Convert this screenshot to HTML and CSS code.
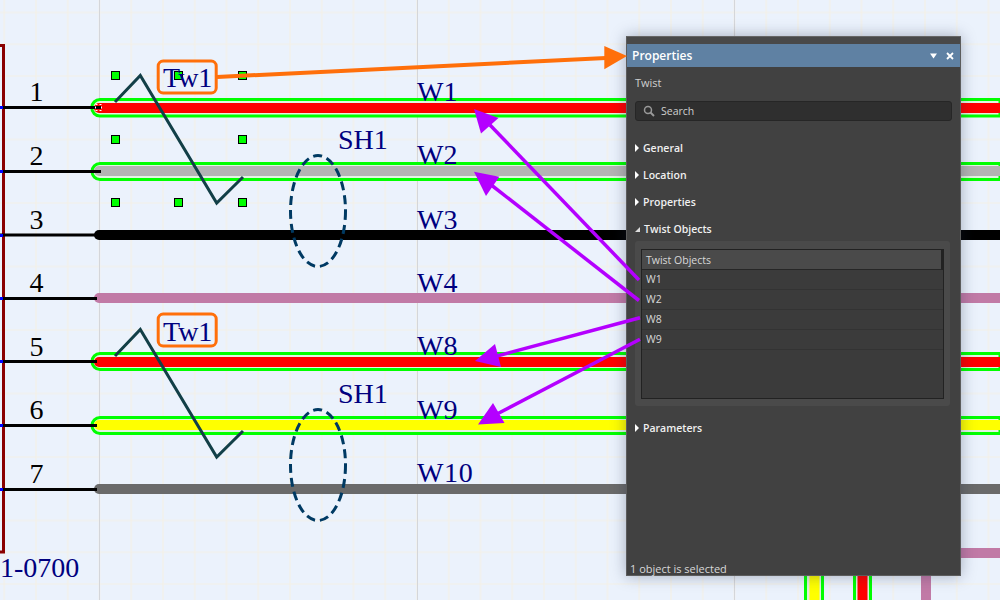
FILE: index.html
```html
<!DOCTYPE html>
<html lang="en">
<head>
<meta charset="utf-8">
<title>Twist properties</title>
<link rel="stylesheet" href="styles.css">
</head>
<body>
<div class="stage">
<svg class="sheet" width="1000" height="600" viewBox="0 0 1000 600">
  <defs>
    <pattern id="grid" x="3.250" y="11.500" width="31.750" height="31.750" patternUnits="userSpaceOnUse">
      <path d="M1 0V31.750M0 1H31.750" class="gridline"/>
    </pattern>
  </defs>
  <rect width="1000" height="600" fill="url(#grid)"/>
  <path d="M99.5 0V600M417.5 0V600M734.5 0V600" class="majorline"/>

  <g class="halo">
    <path d="M1000 99.500H100a8 8 0 0 0 0 16.500H1000z"/>
    <path d="M1000 163.500H100a8 8 0 0 0 0 16H1000z"/>
    <path d="M1000 353.500H100a8 8 0 0 0 0 16H1000z"/>
    <path d="M1000 417.500H100a8 8 0 0 0 0 16H1000z"/>
  </g>
  <g class="wires">
    <path d="M99 108H1000" stroke="#ff0000"/>
    <path d="M99 171H1000" stroke="#b4b4b4"/>
    <path d="M99 235H1000" stroke="#000000"/>
    <path d="M99 298H1000" stroke="#c17aa6"/>
    <path d="M99 362H1000" stroke="#ff0000"/>
    <path d="M99 425H1000" stroke="#ffff00"/>
    <path d="M99 489H1000" stroke="#6a6a6a"/>
  </g>

  <path d="M0 45.500H3.500V552H0" class="part"/>
  <g class="pins">
    <path d="M0 107.500H101M0 171.500H101M0 235H97M0 298.500H97M0 361.500H97M0 425.500H97M0 489.500H97"/>
  </g>
  <path d="M0 106h3v3h-3zM0 170h3v3h-3zM0 234h3v3h-3zM0 297h3v3h-3zM0 360h3v3h-3zM0 424h3v3h-3zM0 488h3v3h-3z" class="pindot"/>
  <rect x="95.500" y="104.500" width="6" height="6" class="anchor"/>

  <g class="pin-num">
    <text x="29.500" y="101">1</text>
    <text x="29.500" y="165">2</text>
    <text x="29.500" y="229">3</text>
    <text x="29.500" y="292">4</text>
    <text x="29.500" y="356">5</text>
    <text x="29.500" y="418.500">6</text>
    <text x="29.500" y="482.500">7</text>
  </g>

  <g class="label">
    <text x="417" y="101">W1</text>
    <text x="417" y="164">W2</text>
    <text x="417" y="229">W3</text>
    <text x="417" y="292">W4</text>
    <text x="417" y="355">W8</text>
    <text x="417" y="419">W9</text>
    <text x="417" y="482" class="wide">W10</text>
    <text x="338" y="149">SH1</text>
    <text x="338" y="403">SH1</text>
    <text x="0" y="577">1-0700</text>
  </g>

  <path d="M115 102L140.300 75.500L216.700 203L243 177" class="twist"/>
  <path d="M115 356L140.300 329.500L216.700 457L243 431" class="twist"/>
  <ellipse cx="318" cy="211" rx="27.500" ry="55.500" class="shield"/>
  <ellipse cx="318" cy="465" rx="27.500" ry="55.500" class="shield"/>

  <rect x="158.200" y="61" width="58" height="32" rx="5" class="tag"/>
  <rect x="158.200" y="314" width="58" height="32" rx="5" class="tag"/>

  <g class="handle">
    <rect x="111.500" y="71.500" width="8" height="8"/>
    <rect x="174.500" y="71.500" width="8" height="8"/>
    <rect x="238.500" y="71.500" width="8" height="8"/>
    <rect x="111.500" y="135.500" width="8" height="8"/>
    <rect x="238.500" y="135.500" width="8" height="8"/>
    <rect x="111.500" y="198.500" width="8" height="8"/>
    <rect x="174.500" y="198.500" width="8" height="8"/>
    <rect x="238.500" y="198.500" width="8" height="8"/>
  </g>
  <text x="163" y="87" class="label-text">Tw1</text>
  <text x="163" y="341" class="label-text">Tw1</text>

  <path d="M805.500 575V600M822.500 575V600M854.500 575V600M870.500 575V600" class="stub"/>
  <path d="M807 575H821V600H807zM856 575H869V600H856z" fill="#dff0dc"/>
  <path d="M809.500 575H819.500V600H809.500z" fill="#ffff00"/>
  <path d="M857.500 575H867.500V600H857.500z" fill="#ff0000"/>
  <path d="M921 575H931V600H921zM961 548H1000V558H961z" fill="#c17aa6"/>
</svg>

<section class="panel">
  <div class="panel-top"></div>
  <header class="titlebar">
    <span class="title">Properties</span>
    <span class="title-tools">
      <svg width="7" height="6" viewBox="0 0 7 6"><path d="M0 0.500H7L3.500 5.500z" fill="#fff"/></svg>
      <svg width="8" height="8" viewBox="0 0 8 8"><path d="M1 1L7 7M7 1L1 7" stroke="#fff" stroke-width="1.800"/></svg>
    </span>
  </header>
  <div class="body">
    <div class="kind">Twist</div>
    <div class="search">
      <svg width="12" height="12" viewBox="0 0 12 12"><circle cx="5" cy="5" r="3.500" fill="none" stroke="#999" stroke-width="1.500"/><path d="M7.500 7.500L11 11" stroke="#999" stroke-width="2"/></svg>
      <span>Search</span>
    </div>
    <div class="section first"><i class="tri-right"></i>General</div>
    <div class="section"><i class="tri-right"></i>Location</div>
    <div class="section"><i class="tri-right"></i>Properties</div>
    <div class="section"><i class="tri-down"></i>Twist Objects</div>
    <div class="group">
      <div class="table">
        <div class="thead">Twist Objects</div>
        <div class="row">W1</div>
        <div class="row">W2</div>
        <div class="row">W8</div>
        <div class="row">W9</div>
      </div>
    </div>
    <div class="section params"><i class="tri-right"></i>Parameters</div>
  </div>
  <footer class="status">1 object is selected</footer>
</section>

<svg class="overlay" width="1000" height="600" viewBox="0 0 1000 600">
  <path d="M217 77L606 58" class="arrow-orange"/>
  <path d="M604.300 46L627 56L604.300 69.300z" fill="#ff6f0a"/>
  <g class="arrow-violet">
    <path d="M639 280L490 125"/>
    <path d="M639 300.500L490 184"/>
    <path d="M640 317.700L497 356"/>
    <path d="M640 339.300L497 414"/>
  </g>
  <path d="M474 109L498.500 118L481 133.500z" fill="#b400ff"/>
  <path d="M474 171.700L499.300 176.700L486 196z" fill="#b400ff"/>
  <path d="M475 361L495 344L501 367z" fill="#b400ff"/>
  <path d="M478 424.500L504.500 423L493 403z" fill="#b400ff"/>
</svg>
</div>
</body>
</html>
```
FILE: styles.css
```css
* { box-sizing: border-box; }
html, body { margin: 0; padding: 0; }
body { width: 1000px; height: 600px; overflow: hidden; background: #ebf2fc; }
.stage { position: relative; width: 1000px; height: 600px; overflow: hidden; }
.sheet { display: block; }
.overlay { position: absolute; left: 0; top: 0; pointer-events: none; }
.gridline { fill: none; stroke: #f4f0e6; stroke-width: 1.200; }
.majorline { fill: none; stroke: #d4d6da; stroke-width: 1; }
.part { fill: none; stroke: #8a0000; stroke-width: 3; }
.pins path { fill: none; stroke: #000; stroke-width: 3; }
.pindot { fill: #0000ff; }
.anchor { fill: none; stroke: #fff; stroke-width: 1; stroke-dasharray: 2 2; }
.halo path { fill: #e2f4e2; stroke: #00ff00; stroke-width: 3; }
.wires path { fill: none; stroke-width: 10; stroke-linecap: round; }
.stub { fill: none; stroke: #00ff00; stroke-width: 3; }
.pin-num text { font: 28px "Liberation Serif", serif; fill: #000; }
.label text, .label-text { font: 28px "Liberation Serif", serif; fill: #00007f; }
.label .wide { letter-spacing: .6px; }
.twist { fill: none; stroke: #123f47; stroke-width: 3; }
.shield { fill: none; stroke: #003a63; stroke-width: 3; stroke-dasharray: 9 5; }
.tag { fill: none; stroke: #ff6f0a; stroke-width: 3; }
.handle rect { fill: #00ff00; stroke: #000; stroke-width: 1; }
.arrow-orange { fill: none; stroke: #ff6f0a; stroke-width: 4; }
.arrow-violet path { fill: none; stroke: #b400ff; stroke-width: 3.500; }

.panel {
  position: absolute; left: 626px; top: 36px; width: 335px; height: 540px;
  background: #414141; border: 1px solid #5c5c5c; border-top-color: #666;
  box-shadow: 0 0 14px rgba(30, 40, 70, .35);
  display: flex; flex-direction: column;
  font-family: "Open Sans", "Noto Sans", sans-serif; color: #d8d8d8;
}
.panel-top { height: 7px; background: #494949; }
.titlebar {
  height: 23px; background: #5f81a3; display: flex; align-items: center; justify-content: space-between;
  padding: 0 6px 0 5px; color: #fff;
}
.title { font-size: 12px; font-weight: 600; line-height: 21px; margin-top: -1px; }
.title-tools { display: flex; align-items: center; gap: 9px; }
.title-tools svg { display: block; }
.body { flex: 1; padding: 0 8px; }
.kind { font-size: 11px; margin-top: 9px; line-height: 14px; color: #cfcfcf; }
.search {
  margin-top: 11px; height: 20px; background: #2f2f2f; border: 1px solid #262626; border-radius: 3px;
  display: flex; align-items: center; gap: 6px; padding-left: 7px; font-size: 10.500px; color: #cfcfcf;
}
.search svg { display: block; }
.section {
  display: flex; align-items: center; gap: 4px; font-size: 10.500px; font-weight: 600; color: #f0f0f0; height: 14px;
  margin-top: 13px;
}
.section.first { margin-top: 20px; }
.tri-right { width: 0; height: 0; border-left: 4px solid #fff; border-top: 4px solid transparent; border-bottom: 4px solid transparent; }
.tri-down { width: 0; height: 0; border-left: 5px solid transparent; border-bottom: 5px solid #ddd; margin-top: 1px; }
.group { margin-top: 5px; height: 165px; background: #4a4a4a; border-radius: 3px; padding: 8px 6px; margin-right: 2px; }
.table { height: 150px; border: 1px solid #222; background: #3b3b3b; }
.thead { height: 20px; line-height: 21px; background: #4a4a4a; border-bottom: 1px solid #262626; border-right: 2px solid #222; padding-left: 4px; font-size: 10.500px; color: #d8d8d8; }
.row { height: 20px; line-height: 19px; border-bottom: 1px solid #333; padding-left: 4px; font-size: 10.500px; color: #d8d8d8; }
.params { margin-top: 15px; }
.status { height: 12px; line-height: 12px; padding-left: 3px; font-size: 11px; color: #d8d8d8; }
```
